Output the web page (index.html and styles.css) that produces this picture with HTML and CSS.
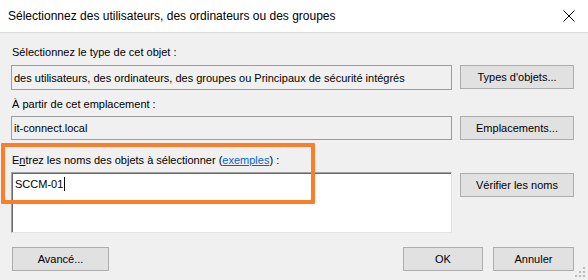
FILE: index.html
```html
<!DOCTYPE html>
<html lang="fr">
<head>
    <meta charset="UTF-8">
    <meta name="viewport" content="width=device-width, initial-scale=1.0">
    <title>Sélectionnez des utilisateurs, des ordinateurs ou des groupes</title>
    <link rel="stylesheet" href="styles.css">
</head>
<body>
    <div class="dialog">
        <div class="title-bar">
            <span class="title">Sélectionnez des utilisateurs, des ordinateurs ou des groupes</span>
            <svg class="close-icon" width="12" height="12" viewBox="0 0 12 12">
                <path d="M0.5 0.5 L11.5 11.5 M11.5 0.5 L0.5 11.5" stroke="#000" stroke-width="1" fill="none"/>
            </svg>
        </div>
        <div class="dialog-body">
            <div class="field-label label-type">Sélectionnez le type de cet objet :</div>
            <div class="readonly-box box-type">des utilisateurs, des ordinateurs, des groupes ou Principaux de sécurité intégrés</div>
            <button class="win-btn btn-side">Types d'objets...</button>

            <div class="field-label label-location">À partir de cet emplacement :</div>
            <div class="readonly-box box-location">it-connect.local</div>
            <button class="win-btn btn-side">Emplacements...</button>

            <div class="field-label label-names">E<u>n</u>trez les noms des objets à sélectionner (<a href="#" class="link">exemples</a>) :</div>
            <div class="names-box">SCCM-01<span class="caret"></span></div>
            <button class="win-btn btn-side btn-check">Vérifier les noms</button>

            <div class="footer">
                <button class="win-btn btn-advanced">Avancé...</button>
                <div class="footer-right">
                    <button class="win-btn btn-ok">OK</button>
                    <button class="win-btn btn-cancel">Annuler</button>
                </div>
            </div>
        </div>
        <div class="highlight"></div>
        <svg class="grip" width="10" height="10" viewBox="0 0 10 10">
            <rect x="8" y="0" width="2" height="2" fill="#bcbcbc"/>
            <rect x="4" y="4" width="2" height="2" fill="#bcbcbc"/>
            <rect x="8" y="4" width="2" height="2" fill="#bcbcbc"/>
            <rect x="0" y="8" width="2" height="2" fill="#bcbcbc"/>
            <rect x="4" y="8" width="2" height="2" fill="#bcbcbc"/>
            <rect x="8" y="8" width="2" height="2" fill="#bcbcbc"/>
        </svg>
    </div>
</body>
</html>
```

FILE: styles.css
```css
body {
    margin: 0;
    background-color: #f0f0f0;
    font-family: "Liberation Sans", Arial, sans-serif;
    font-size: 11px;
    color: #000;
}
.dialog {
    position: relative;
    width: 588px;
    height: 280px;
    overflow: hidden;
}
.title-bar {
    height: 32px;
    background-color: #fff;
    border-bottom: 1px solid #dadada;
    display: flex;
    align-items: center;
    justify-content: space-between;
    padding: 0 13px 0 8px;
}
.title {
    font-size: 12px;
    color: #000;
}
.close-icon {
    display: block;
}
.dialog-body {
    display: grid;
    grid-template-columns: 441px 114px;
    column-gap: 8px;
    padding: 13px 14px 0 11px;
    align-items: start;
}
.field-label {
    grid-column: 1 / -1;
    line-height: 13px;
    padding-left: 1px;
}
.label-location {
    margin-top: 8px;
}
.label-names {
    margin-top: 14px;
}
.field-label u {
    text-decoration: underline;
}
.link {
    color: #0066cc;
    text-decoration: underline;
}
.readonly-box {
    box-sizing: border-box;
    height: 25px;
    margin-top: 6px;
    border: 1px solid #9c9c9c;
    background-color: #f0f0f0;
    padding: 0 2px;
    display: flex;
    align-items: center;
    white-space: nowrap;
    overflow: hidden;
}
.box-location {
    height: 24px;
    margin-top: 5px;
}
.names-box {
    box-sizing: border-box;
    height: 61px;
    margin-top: 5px;
    background-color: #fff;
    border-style: solid;
    border-width: 1px;
    border-color: #a0a0a0 #e3e3e3 #e3e3e3 #a0a0a0;
    box-shadow: inset 1px 1px 0 #696969;
    padding: 4px 3px;
    line-height: 13px;
}
.caret {
    display: inline-block;
    width: 1px;
    height: 14px;
    background-color: #000;
    vertical-align: -3px;
    margin-left: 1px;
}
.win-btn {
    box-sizing: border-box;
    height: 24px;
    background-color: #e1e1e1;
    border: 1px solid #adadad;
    font-family: "Liberation Sans", Arial, sans-serif;
    font-size: 11px;
    color: #000;
    padding: 0;
    margin: 0;
}
.btn-side {
    width: 114px;
    margin-top: 6px;
}
.box-location + .btn-side {
    margin-top: 5px;
}
.btn-check {
    margin-top: 6px;
}
.footer {
    grid-column: 1 / -1;
    display: flex;
    justify-content: space-between;
    margin-top: 14px;
}
.btn-advanced {
    width: 97px;
    margin-left: 1px;
}
.footer-right {
    display: flex;
    gap: 10px;
}
.btn-ok {
    width: 80px;
}
.btn-cancel {
    width: 81px;
}
.highlight {
    position: absolute;
    left: 1px;
    top: 143px;
    width: 314px;
    height: 61px;
    box-sizing: border-box;
    border: 4px solid #fb7f2a;
    border-radius: 1px;
}
.grip {
    position: absolute;
    right: 3px;
    bottom: 3px;
}
```
